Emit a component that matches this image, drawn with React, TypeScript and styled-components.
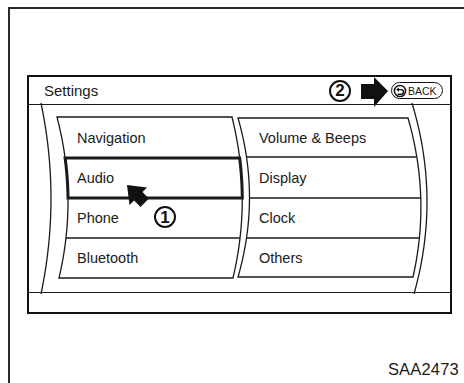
import styled, { createGlobalStyle } from 'styled-components';

const GlobalStyle = createGlobalStyle`
  html, body {
    margin: 0;
    padding: 0;
    background: #fff;
    overflow: hidden;
  }
  body {
    font-family: "Liberation Sans", Arial, sans-serif;
    color: #1a1a1a;
  }
`;

type Edge = { x0: number; cx: number; x2: number; y0: number; y2: number };

type Column = {
  left: Edge;
  right: Edge;
  top: number;
  bottom: number;
  dividers: number[];
  items: string[];
};

const MIDDLE_H = 187;

const edgeX = (e: Edge, y: number) => {
  const t = (y - e.y0) / (e.y2 - e.y0);
  return (1 - t) * (1 - t) * e.x0 + 2 * t * (1 - t) * e.cx + t * t * e.x2;
};

const edgePts = (e: Edge, ya: number, yb: number): [number, number][] => {
  const pts: [number, number][] = [];
  const n = 20;
  for (let i = 0; i <= n; i++) {
    const y = ya + ((yb - ya) * i) / n;
    pts.push([edgeX(e, y), y]);
  }
  return pts;
};

const toStr = (pts: [number, number][]) => pts.map(([x, y]) => `${x.toFixed(2)},${y.toFixed(2)}`).join(' ');

const leftOuter: Edge = { x0: 12, cx: 32, x2: 12, y0: -2, y2: MIDDLE_H + 2 };
const rightOuter: Edge = { x0: 383, cx: 412, x2: 385, y0: -2, y2: MIDDLE_H + 2 };

const columns: Column[] = [
  {
    left: { x0: 28, cx: 49, x2: 30, y0: 12, y2: 173 },
    right: { x0: 203, cx: 223, x2: 204, y0: 12, y2: 173 },
    top: 12,
    bottom: 173,
    dividers: [53, 93, 133],
    items: ['Navigation', 'Audio', 'Phone', 'Bluetooth'],
  },
  {
    left: { x0: 209, cx: 232, x2: 209, y0: 13, y2: 172 },
    right: { x0: 379, cx: 402, x2: 384, y0: 13, y2: 172 },
    top: 13,
    bottom: 172,
    dividers: [52, 93, 133],
    items: ['Volume & Beeps', 'Display', 'Clock', 'Others'],
  },
];

const Page = styled.div`
  padding: 7px 0 0 8px;
`;

const Frame = styled.div`
  box-sizing: border-box;
  width: 456px;
  height: 376px;
  border-top: 2px solid #2b2b2b;
  border-left: 2px solid #2b2b2b;
  padding: 66px 0 0 17px;
  display: flex;
  flex-direction: column;
`;

const Screen = styled.div`
  box-sizing: border-box;
  width: 425px;
  border: 2px solid #111;
  display: flex;
  flex-direction: column;
`;

const Header = styled.div`
  height: 27px;
  border-bottom: 1.5px solid #1a1a1a;
  display: flex;
  align-items: center;
  padding: 0 7px 0 15px;
`;

const Title = styled.div`
  flex: 1;
  font-size: 15px;
`;

const Circled = styled.span`
  box-sizing: border-box;
  width: 22px;
  height: 22px;
  border: 2px solid #111;
  border-radius: 50%;
  background: #fff;
  display: flex;
  align-items: center;
  justify-content: center;
  font-weight: bold;
  font-size: 17px;
  line-height: 1;
  color: #111;
`;

const HeaderBadge = styled(Circled)`
  margin-right: 10px;
  position: relative;
  z-index: 1;
`;

const Marker = styled(Circled)<{ $x: number; $y: number }>`
  position: absolute;
  left: ${(p) => p.$x}px;
  top: ${(p) => p.$y}px;
  z-index: 2;
`;

const PointerArrow = styled.svg`
  align-self: flex-start;
  width: 28px;
  height: 32px;
  margin-right: 2px;
  overflow: visible;
  position: relative;
  z-index: 2;
`;

const BackPill = styled.div`
  box-sizing: border-box;
  width: 52px;
  height: 17px;
  border: 1.5px solid #111;
  border-radius: 9px;
  display: flex;
  align-items: center;
  gap: 1px;
  padding-left: 1px;
  font-size: 10.5px;
  background: #fff;
`;

const Middle = styled.div`
  position: relative;
  height: ${MIDDLE_H}px;
`;

const Decor = styled.svg`
  position: absolute;
  inset: 0;
  width: 100%;
  height: 100%;
  overflow: visible;
`;

const Menu = styled.div`
  position: relative;
  display: grid;
  grid-template-columns: 182px 1fr;
  grid-template-rows: repeat(4, 40px);
  grid-auto-flow: column;
  padding: 13px 0 0 48px;
`;

const Item = styled.div`
  display: flex;
  align-items: center;
  font-size: 14.5px;
`;

const Cursor = styled.svg<{ $x: number; $y: number }>`
  position: absolute;
  left: ${(p) => p.$x}px;
  top: ${(p) => p.$y}px;
  width: 27px;
  height: 27px;
  z-index: 2;
`;

const Footer = styled.div`
  height: 19px;
  border-top: 1.5px solid #1a1a1a;
`;

const Code = styled.div`
  margin-top: auto;
  align-self: flex-end;
  margin-right: 5px;
  margin-bottom: 4px;
  font-size: 16.5px;
  color: #1a1a1a;
  letter-spacing: 0.2px;
`;

function BackIcon() {
  return (
    <svg width="14" height="14" viewBox="0 0 14 14">
      <circle cx="7" cy="7" r="5.6" fill="none" stroke="#111" strokeWidth="1.5" />
      <path d="M3.2 5.6 L6 3.4 L6 7.8 Z" fill="#111" />
      <path d="M5.8 5.6 H8.2 A2.3 2.3 0 0 1 8.2 10.2 H4.6" fill="none" stroke="#111" strokeWidth="1.4" />
    </svg>
  );
}

function PanelDrawing({ highlight }: { highlight: [number, number] }) {
  const [ci, ri] = highlight;
  const hc = columns[ci];
  const rowsY = [hc.top, ...hc.dividers, hc.bottom];
  const ya = rowsY[ri];
  const yb = rowsY[ri + 1];
  const box = [...edgePts(hc.right, ya, yb), ...edgePts(hc.left, ya, yb).reverse()];

  return (
    <Decor viewBox={`0 0 421 ${MIDDLE_H}`} preserveAspectRatio="none">
      <g fill="none" stroke="#1a1a1a" strokeWidth="1.3">
        <polyline points={toStr(edgePts(leftOuter, -2, MIDDLE_H + 2))} />
        <polyline points={toStr(edgePts(rightOuter, -2, MIDDLE_H + 2))} />
        {columns.map((c, i) => {
          const outline = [
            ...edgePts(c.right, c.top, c.bottom),
            ...edgePts(c.left, c.top, c.bottom).reverse(),
          ];
          return (
            <g key={i}>
              <polygon points={toStr(outline)} />
              {c.dividers.map((y) => (
                <line key={y} x1={edgeX(c.left, y)} y1={y} x2={edgeX(c.right, y)} y2={y} />
              ))}
            </g>
          );
        })}
        <polygon points={toStr(box)} strokeWidth="3" strokeLinejoin="miter" />
      </g>
    </Decor>
  );
}

export default function App() {
  return (
    <>
      <GlobalStyle />
      <Page>
        <Frame>
          <Screen>
            <Header>
              <Title>Settings</Title>
              <HeaderBadge>2</HeaderBadge>
              <PointerArrow viewBox="0 0 28 32">
                <path d="M0 7 H13 V0 L27 14 L13 30 V22 H0 Z" fill="#111" />
              </PointerArrow>
              <BackPill>
                <BackIcon />
                <span>BACK</span>
              </BackPill>
            </Header>
            <Middle>
              <PanelDrawing highlight={[0, 1]} />
              <Menu>
                {columns.map((c) => c.items.map((label) => <Item key={label}>{label}</Item>))}
              </Menu>
              <Cursor $x={96} $y={78} viewBox="0 0 27 27">
                <path
                  d="M2 2 L22.1 4.5 L17.5 9.1 L23.9 15.5 L15.5 23.9 L9.1 17.5 L4.5 22.1 Z"
                  fill="#111"
                />
              </Cursor>
              <Marker $x={125} $y={101}>1</Marker>
            </Middle>
            <Footer />
          </Screen>
          <Code>SAA2473</Code>
        </Frame>
      </Page>
    </>
  );
}
